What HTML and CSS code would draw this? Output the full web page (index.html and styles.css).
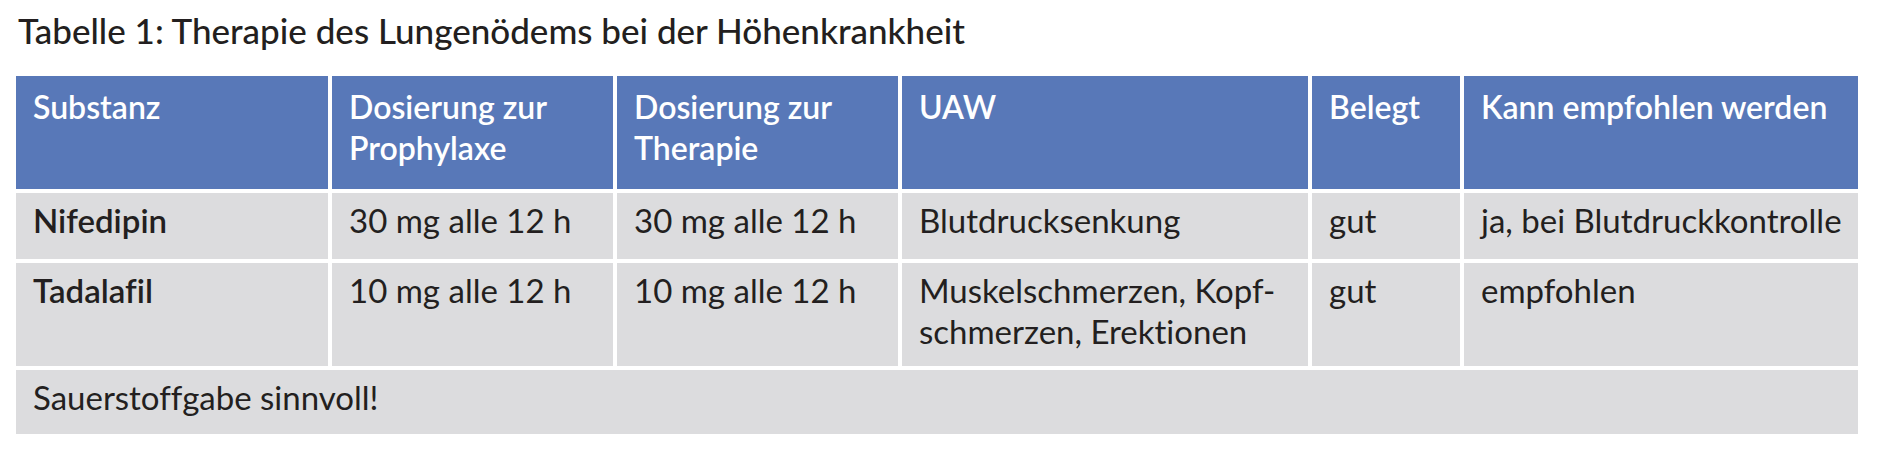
FILE: index.html
```html
<!DOCTYPE html>
<html lang="de">
<head>
<meta charset="utf-8">
<title>Tabelle 1</title>
<link rel="stylesheet" href="styles.css">
</head>
<body>
<div class="page">
  <h1 class="caption">Tabelle 1: Therapie des Lungenödems bei der Höhenkrankheit</h1>
  <div class="grid">
    <div class="cell head">Substanz</div>
    <div class="cell head">Dosierung zur<br>Prophylaxe</div>
    <div class="cell head">Dosierung zur<br>Therapie</div>
    <div class="cell head">UAW</div>
    <div class="cell head">Belegt</div>
    <div class="cell head">Kann empfohlen werden</div>

    <div class="cell body name">Nifedipin</div>
    <div class="cell body">30 mg alle 12 h</div>
    <div class="cell body">30 mg alle 12 h</div>
    <div class="cell body">Blutdrucksenkung</div>
    <div class="cell body">gut</div>
    <div class="cell body">ja, bei Blutdruckkontrolle</div>

    <div class="cell body name">Tadalafil</div>
    <div class="cell body">10 mg alle 12 h</div>
    <div class="cell body">10 mg alle 12 h</div>
    <div class="cell body">Muskelschmerzen, Kopf-<br>schmerzen, Erektionen</div>
    <div class="cell body">gut</div>
    <div class="cell body">empfohlen</div>

    <div class="cell body full">Sauerstoffgabe sinnvoll!</div>
  </div>
</div>
</body>
</html>
```

FILE: styles.css
```css
html, body {
  margin: 0;
  padding: 0;
  background: #ffffff;
}

.page {
  padding: 9px 20px 0 16px;
  font-family: Lato, "Open Sans", sans-serif;
  color: #231f20;
  font-variant-ligatures: none;
  font-feature-settings: "liga" 0, "dlig" 0;
}

.caption {
  margin: 0 0 25px 2px;
  font-size: 35px;
  line-height: 42px;
  font-weight: 500;
  color: #231f20;
}

.grid {
  display: grid;
  grid-template-columns: 312px 281px 281px 406px 148px 394px;
  grid-template-rows: 113px 66px 103px 64px;
  gap: 4px;
}

.cell {
  font-size: 33px;
  line-height: 41px;
  padding: 7px 10px 0 17px;
  white-space: nowrap;
}

.head {
  background: #5878b8;
  color: #ffffff;
  font-weight: 600;
  font-size: 32px;
  padding-top: 10px;
}

.body {
  background: #dcdcde;
  color: #231f20;
}

.name {
  font-weight: 600;
}

.full {
  grid-column: 1 / -1;
}
```
